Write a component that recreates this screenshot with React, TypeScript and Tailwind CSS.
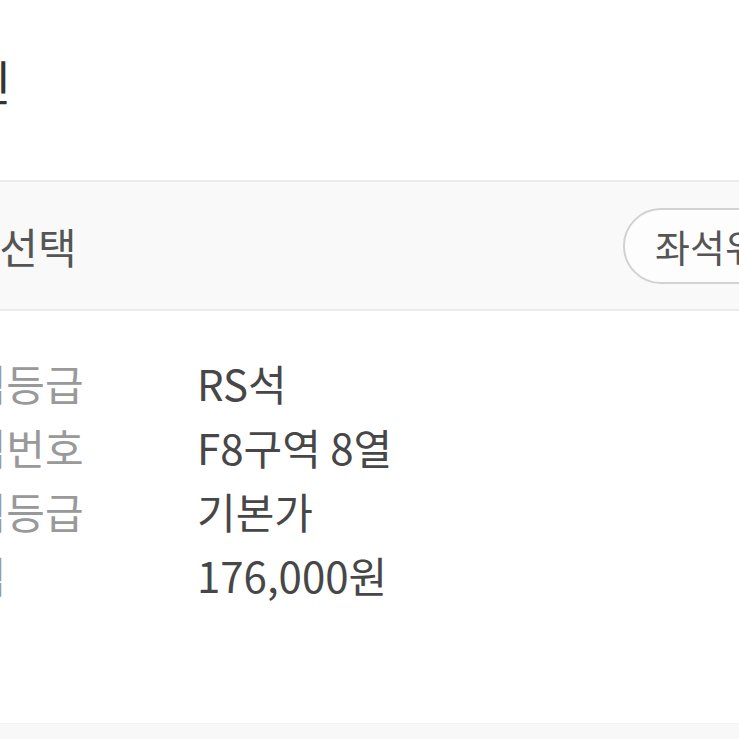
import React from "react";

const rows = [
  { label: "좌석등급", value: "RS석" },
  { label: "좌석번호", value: "F8구역 8열" },
  { label: "가격등급", value: "기본가" },
  { label: "가격", value: "176,000원" },
];

export default function App() {
  return (
    <div
      className="w-[739px] h-[739px] overflow-hidden bg-white flex flex-col"
      style={{ fontFamily: '"Noto Sans CJK KR", "Noto Sans", sans-serif' }}
    >
      <div className="h-[180px] shrink-0 flex items-start pt-[50px] overflow-hidden">
        <div className="-ml-[77px] text-[48px] leading-[60px] text-[#333] whitespace-nowrap">
          확인
        </div>
      </div>
      <div className="h-[131px] shrink-0 bg-[#f9f9f9] border-y-2 border-[#ebebeb] flex items-center overflow-hidden">
        <div className="w-[623px] shrink-0 overflow-hidden">
          <div className="-ml-[78px] text-[42px] leading-[50px] text-[#555] whitespace-nowrap">
            좌석선택
          </div>
        </div>
        <button className="shrink-0 h-[76px] rounded-full border-2 border-[#d2d2d2] bg-[#fdfdfd] pl-[30px] pr-[40px] text-[38px] leading-[46px] text-[#555] whitespace-nowrap">
          좌석위치보기
        </button>
      </div>
      <div className="pt-[40px] flex flex-col overflow-hidden">
        {rows.map((r) => (
          <div key={r.label} className="h-[64px] flex items-center">
            <div className="w-[268px] shrink-0 -ml-[71px] text-[42px] leading-[50px] text-[#999] whitespace-nowrap">
              {r.label}
            </div>
            <div className="text-[42px] leading-[50px] text-[#474747] whitespace-nowrap">{r.value}</div>
          </div>
        ))}
      </div>
      <div className="flex-1" />
      <div className="h-[16px] shrink-0 bg-[#f8f8f8] border-t border-[#f2f2f2]" />
    </div>
  );
}
